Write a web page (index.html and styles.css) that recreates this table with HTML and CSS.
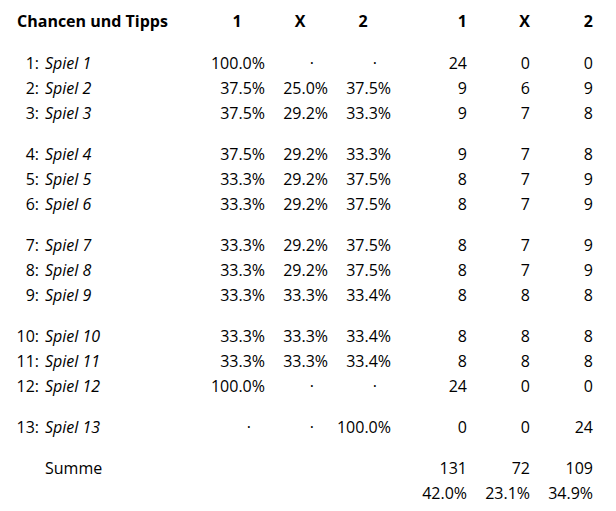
FILE: index.html
```html
<!DOCTYPE html>
<html lang="de">
<head>
<meta charset="utf-8">
<title>Chancen und Tipps</title>
<link rel="stylesheet" href="styles.css">
</head>
<body>
<div class="sheet">
  <div class="row head">
    <div class="title">Chancen und Tipps</div>
    <div class="ph">1</div><div class="ph">X</div><div class="ph">2</div>
    <div class="ch c1">1</div><div class="ch">X</div><div class="ch">2</div>
  </div>

  <div class="group">
    <div class="row"><div class="lbl"><span class="no">1:</span><em>Spiel 1</em></div><div class="p">100.0%</div><div class="p dot">·</div><div class="p dot">·</div><div class="c c1">24</div><div class="c">0</div><div class="c">0</div></div>
    <div class="row"><div class="lbl"><span class="no">2:</span><em>Spiel 2</em></div><div class="p">37.5%</div><div class="p">25.0%</div><div class="p">37.5%</div><div class="c c1">9</div><div class="c">6</div><div class="c">9</div></div>
    <div class="row"><div class="lbl"><span class="no">3:</span><em>Spiel 3</em></div><div class="p">37.5%</div><div class="p">29.2%</div><div class="p">33.3%</div><div class="c c1">9</div><div class="c">7</div><div class="c">8</div></div>
  </div>

  <div class="group">
    <div class="row"><div class="lbl"><span class="no">4:</span><em>Spiel 4</em></div><div class="p">37.5%</div><div class="p">29.2%</div><div class="p">33.3%</div><div class="c c1">9</div><div class="c">7</div><div class="c">8</div></div>
    <div class="row"><div class="lbl"><span class="no">5:</span><em>Spiel 5</em></div><div class="p">33.3%</div><div class="p">29.2%</div><div class="p">37.5%</div><div class="c c1">8</div><div class="c">7</div><div class="c">9</div></div>
    <div class="row"><div class="lbl"><span class="no">6:</span><em>Spiel 6</em></div><div class="p">33.3%</div><div class="p">29.2%</div><div class="p">37.5%</div><div class="c c1">8</div><div class="c">7</div><div class="c">9</div></div>
  </div>

  <div class="group">
    <div class="row"><div class="lbl"><span class="no">7:</span><em>Spiel 7</em></div><div class="p">33.3%</div><div class="p">29.2%</div><div class="p">37.5%</div><div class="c c1">8</div><div class="c">7</div><div class="c">9</div></div>
    <div class="row"><div class="lbl"><span class="no">8:</span><em>Spiel 8</em></div><div class="p">33.3%</div><div class="p">29.2%</div><div class="p">37.5%</div><div class="c c1">8</div><div class="c">7</div><div class="c">9</div></div>
    <div class="row"><div class="lbl"><span class="no">9:</span><em>Spiel 9</em></div><div class="p">33.3%</div><div class="p">33.3%</div><div class="p">33.4%</div><div class="c c1">8</div><div class="c">8</div><div class="c">8</div></div>
  </div>

  <div class="group">
    <div class="row"><div class="lbl"><span class="no">10:</span><em>Spiel 10</em></div><div class="p">33.3%</div><div class="p">33.3%</div><div class="p">33.4%</div><div class="c c1">8</div><div class="c">8</div><div class="c">8</div></div>
    <div class="row"><div class="lbl"><span class="no">11:</span><em>Spiel 11</em></div><div class="p">33.3%</div><div class="p">33.3%</div><div class="p">33.4%</div><div class="c c1">8</div><div class="c">8</div><div class="c">8</div></div>
    <div class="row"><div class="lbl"><span class="no">12:</span><em>Spiel 12</em></div><div class="p">100.0%</div><div class="p dot">·</div><div class="p dot">·</div><div class="c c1">24</div><div class="c">0</div><div class="c">0</div></div>
  </div>

  <div class="group">
    <div class="row"><div class="lbl"><span class="no">13:</span><em>Spiel 13</em></div><div class="p dot">·</div><div class="p dot">·</div><div class="p">100.0%</div><div class="c c1">0</div><div class="c">0</div><div class="c">24</div></div>
  </div>

  <div class="group">
    <div class="row"><div class="lbl"><span class="no"></span>Summe</div><div class="p"></div><div class="p"></div><div class="p"></div><div class="c c1">131</div><div class="c">72</div><div class="c">109</div></div>
    <div class="row"><div class="lbl"></div><div class="p"></div><div class="p"></div><div class="p"></div><div class="c c1">42.0%</div><div class="c">23.1%</div><div class="c">34.9%</div></div>
  </div>
</div>
</body>
</html>
```

FILE: styles.css
```css
html, body {
  margin: 0;
  padding: 0;
  background: #ffffff;
}

body {
  font-family: "Open Sans", "Noto Sans", sans-serif;
  font-size: 16px;
  color: #000000;
}

.sheet {
  padding: 9px 0 0 16px;
}

.row {
  display: grid;
  grid-template-columns: 186px 63px 63px 63px 76px 63px 63px;
  height: 25px;
  line-height: 25px;
  white-space: nowrap;
}

.head {
  font-weight: 700;
  margin-bottom: 17px;
}

.title {
  padding-left: 1px;
}

.ph {
  text-align: center;
  padding-left: 7px;
}

.ch {
  text-align: right;
}

.group + .group {
  margin-top: 16px;
}

.lbl {
  display: flex;
}

.no {
  width: 23px;
  text-align: right;
  margin-right: 6px;
  flex: none;
}

.lbl em {
  font-style: italic;
}

.p,
.c {
  text-align: right;
}

.p.dot {
  padding-right: 14px;
}
```
